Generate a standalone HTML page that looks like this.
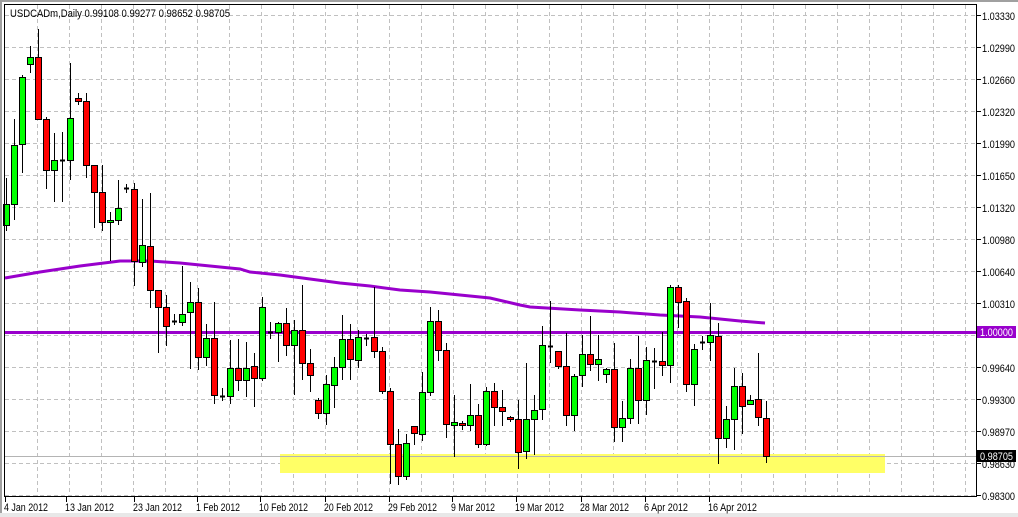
<!DOCTYPE html>
<html><head><meta charset="utf-8"><style>
html,body{margin:0;padding:0;background:#fff;}
svg{display:block;font-family:"Liberation Sans",sans-serif;}
</style></head><body>
<svg id="c" width="1018" height="517" xmlns="http://www.w3.org/2000/svg" shape-rendering="crispEdges">
<rect x="0" y="0" width="1018" height="517" fill="#fff"/>
<rect x="0" y="0" width="1018" height="2" fill="#a0a0a0"/>
<rect x="0" y="0" width="2" height="517" fill="#a0a0a0"/>
<rect x="0" y="513" width="1018" height="4" fill="#e8e8e8"/>
<g id="grid" stroke="#c0c0c0" stroke-dasharray="4,3" stroke-width="1"></g>
<rect x="280" y="454" width="605" height="19" fill="#ffff66"/>
<line x1="5" y1="456.5" x2="976" y2="456.5" stroke="#b4b4b4"/>
<polyline id="ma" fill="none" stroke="#9900cc" stroke-width="3" shape-rendering="auto"
 points="5,278 40,272 80,266 120,261 150,261 180,263 210,266 240,269 250,272 280,275 310,279 340,283 370,286 400,290 430,292 460,295 490,298 520,305 530,307 580,310 620,312 660,315 700,317 740,321 765,323"/>
<rect x="5" y="331" width="971" height="3" fill="#9900cc"/>
<g id="cd"></g>
<rect x="4.5" y="4.5" width="972" height="492" fill="none" stroke="#000"/>
<g id="ax" font-size="11" fill="#000"></g>
<text x="10" y="17" font-size="11" fill="#000" textLength="220" lengthAdjust="spacingAndGlyphs">USDCADm,Daily  0.99108 0.99277 0.98652 0.98705</text>
<rect x="977" y="326" width="39" height="12" fill="#9900cc"/>
<text x="980" y="336" font-size="11" fill="#fff" textLength="33" lengthAdjust="spacingAndGlyphs">1.00000</text>
<rect x="977" y="450" width="39" height="12" fill="#000"/>
<text x="980" y="460" font-size="11" fill="#fff" textLength="33" lengthAdjust="spacingAndGlyphs">0.98705</text>
</svg>
<script>
var NS="http://www.w3.org/2000/svg";
function el(p,t,a){var e=document.createElementNS(NS,t);for(var k in a)e.setAttribute(k,a[k]);p.appendChild(e);return e;}
var g=document.getElementById('grid');
for(var x=37;x<=965;x+=32)el(g,'line',{x1:x+.5,y1:5,x2:x+.5,y2:496});
for(var y=15;y<=495;y+=32)el(g,'line',{x1:5,y1:y+.5,x2:976,y2:y+.5});
var ax=document.getElementById('ax');
var pr=["1.03330","1.02990","1.02660","1.02320","1.01990","1.01650","1.01320","1.00980","1.00640","1.00310","","0.99640","0.99300","0.98970","0.98630","0.98300"];
var ys=[15,47,79,111,143,175,207,239,271,303,0,367,399,431,463,495];
for(var i=0;i<pr.length;i++){if(!pr[i])continue;el(ax,'line',{x1:977,y1:ys[i]+.5,x2:981,y2:ys[i]+.5,stroke:'#000'});var t=el(ax,'text',{x:982,y:ys[i]+5,textLength:33,lengthAdjust:'spacingAndGlyphs'});t.textContent=pr[i];}
var dl=[[5,"4 Jan 2012"],[66,"13 Jan 2012"],[134,"23 Jan 2012"],[197,"1 Feb 2012"],[260,"10 Feb 2012"],[325,"20 Feb 2012"],[389,"29 Feb 2012"],[452,"9 Mar 2012"],[516,"19 Mar 2012"],[581,"28 Mar 2012"],[645,"6 Apr 2012"],[709,"16 Apr 2012"]];
dl.forEach(function(d){el(ax,'line',{x1:d[0]+.5,y1:497,x2:d[0]+.5,y2:502,stroke:'#000'});var t=el(ax,'text',{x:d[0]-1,y:511,textLength:(d[1].length==10?44:49),lengthAdjust:'spacingAndGlyphs'});t.textContent=d[1];});
var C=[
['g',204,225,178,230],['g',145,204,119,219],['g',77,144,75,172],['g',57,64,46,72],['r',57,119,29,119],
['r',119,170,117,188],['g',160,170,133,201],['d',160,160,132,201],['g',118,160,63,179],['r',98,101,93,104],
['r',101,165,93,177],['r',165,192,165,227],['r',192,222,165,230],['g',220,222,212,260],['g',208,220,180,224],
['d',188,188,184,192],['r',189,261,183,285],['g',245,262,199,266],['r',246,290,193,307],['r',290,307,290,352],
['r',307,326,295,345],['d',321,321,314,324],['g',314,322,266,325],['g',302,312,282,368],['r',302,357,288,369],
['g',338,357,324,365],['r',338,395,302,403],['d',396,396,388,400],['g',368,396,340,403],['r',368,380,339,390],
['g',368,380,342,396],['r',366,378,353,406],['g',307,378,297,380],['d',332,332,322,338],['g',323,332,322,361],
['r',323,345,308,355],['g',330,345,320,394],['r',330,363,285,379],['r',363,375,349,391],['r',400,413,398,418],
['g',384,413,375,424],['g',367,385,357,407],['g',339,367,315,379],['r',339,359,324,379],['g',337,360,330,367],
['d',338,338,334,345],['r',337,351,287,357],['r',351,391,347,393],['r',391,444,388,483],['r',444,476,429,484],
['g',443,476,434,479],['r',426,433,426,444],['g',392,434,372,440],['g',321,392,307,395],['r',321,350,310,360],
['r',350,424,343,437],['g',422,425,395,456],['r',423,425,421,429],['g',415,425,384,430],['r',415,444,404,447],
['g',391,444,387,445],['r',391,407,383,425],['r',407,411,390,425],['r',417,419,416,421],['r',419,452,400,468],
['g',419,451,363,458],['g',410,419,395,454],['g',345,409,326,419],['d',346,346,301,362],['r',351,366,351,368],
['r',366,415,333,425],['g',376,415,374,430],['g',354,375,335,386],['r',354,364,316,370],['g',359,364,335,380],
['g',369,374,368,382],['r',369,427,343,441],['g',418,427,401,441],['g',368,418,359,423],['r',368,400,336,423],
['g',360,400,347,414],['d',361,361,348,388],['r',361,365,332,375],['g',287,365,285,382],['r',287,302,285,327],
['r',301,384,298,391],['g',349,384,344,405],['d',342,342,336,349],['g',335,342,303,360],['r',336,438,323,463],
['g',419,438,406,447],['g',386,419,368,449],['r',386,406,373,433],['g',400,404,395,404],['r',399,417,353,425],
['r',418,456,401,462]];
var cd=document.getElementById('cd');
C.forEach(function(c,i){var x=6+i*8;
el(cd,'line',{x1:x+.5,y1:c[3],x2:x+.5,y2:c[4]+1,stroke:'#000'});
if(c[0]=='d'){el(cd,'line',{x1:x-2,y1:c[1]+.5,x2:x+3,y2:c[1]+.5,stroke:'#000','stroke-width':2});}
else{var h=Math.max(c[2]-c[1],2);el(cd,'rect',{x:x-2.5,y:c[1]+.5,width:6,height:h,fill:c[0]=='g'?'#00ff00':'#ff0000',stroke:'#000'});}
});
</script>
</body></html>
